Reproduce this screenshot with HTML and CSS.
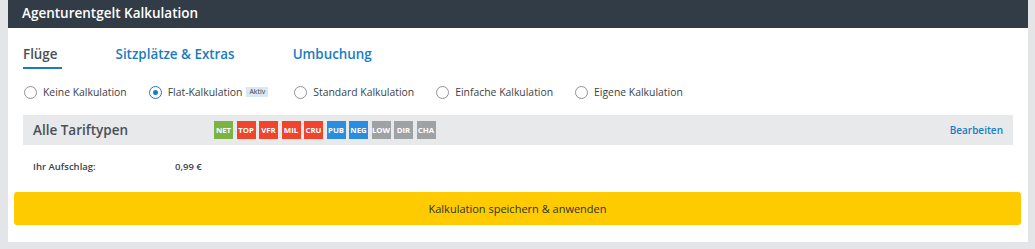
FILE: index.html
```html
<!DOCTYPE html>
<html>
<head>
    <title>Agenturentgelt Kalkulation</title>
    <link rel="stylesheet" href="styles.css">
</head>
<body>
    <div class="panel">
        <div class="panel-header">Agenturentgelt Kalkulation</div>
        <div class="panel-body">
            <div class="tabs">
                <a class="tab active">Flüge</a>
                <a class="tab">Sitzplätze &amp; Extras</a>
                <a class="tab">Umbuchung</a>
            </div>
            <div class="radios">
                <label class="radio"><span class="dot"></span>Keine Kalkulation</label>
                <label class="radio checked"><span class="dot"></span>Flat-Kalkulation <span class="badge-aktiv">Aktiv</span></label>
                <label class="radio"><span class="dot"></span>Standard Kalkulation</label>
                <label class="radio"><span class="dot"></span>Einfache Kalkulation</label>
                <label class="radio"><span class="dot"></span>Eigene Kalkulation</label>
            </div>
            <div class="tarif-bar">
                <div class="tarif-title">Alle Tariftypen</div>
                <div class="tags">
                    <span class="tag green">NET</span>
                    <span class="tag red">TOP</span>
                    <span class="tag red">VFR</span>
                    <span class="tag red">MIL</span>
                    <span class="tag red">CRU</span>
                    <span class="tag blue">PUB</span>
                    <span class="tag blue">NEG</span>
                    <span class="tag grey">LOW</span>
                    <span class="tag grey">DIR</span>
                    <span class="tag grey">CHA</span>
                </div>
                <a class="edit">Bearbeiten</a>
            </div>
            <div class="row">
                <span class="row-label">Ihr Aufschlag:</span>
                <span class="row-value">0,99 €</span>
            </div>
        </div>
        <div class="footer">
            <button class="save">Kalkulation speichern &amp; anwenden</button>
        </div>
    </div>
</body>
</html>
```

FILE: styles.css
```css
body {
    margin: 0;
    background-color: #e4e5e9;
    font-family: "Open Sans", sans-serif;
    color: #3c4248;
}

.panel {
    margin: 0 7px 0 8px;
    background-color: #fff;
    height: 242px;
}

.panel-header {
    height: 28px;
    background-color: #323c46;
    color: #fff;
    font-size: 13.5px;
    font-weight: 600;
    line-height: 27px;
    padding-left: 14px;
}

.panel-body {
    padding: 0 15px 0 15px;
}

.tabs {
    display: flex;
    padding-top: 14px;
    height: 28px;
}

.tab {
    font-size: 13.4px;
    font-weight: 600;
    color: #1a7cc1;
    margin-right: 54px;
    padding-right: 4px;
    line-height: 24px;
    height: 25px;
}

.tab.active {
    color: #4a4f56;
    border-bottom: 2px solid #1a7cc1;
}

.radios {
    display: flex;
    align-items: center;
    padding: 12px 0 0 1px;
    height: 20px;
}

.radio {
    display: flex;
    align-items: center;
    font-size: 10.4px;
    color: #3c4248;
    margin-right: 22px;
}

.dot {
    width: 11px;
    height: 11px;
    border: 1px solid #8f9397;
    border-radius: 50%;
    margin-right: 6px;
    box-sizing: content-box;
    position: relative;
}

.radio.checked .dot {
    border-color: #1a7cc1;
}

.radio.checked .dot::after {
    content: "";
    position: absolute;
    left: 3px;
    top: 3px;
    width: 5px;
    height: 5px;
    border-radius: 50%;
    background-color: #1a7cc1;
}

.badge-aktiv {
    background-color: #d7e8f6;
    color: #3c4248;
    font-size: 7px;
    line-height: 10px;
    padding: 0 3px;
    margin: 0 4px 0 4px;
}

.tarif-bar {
    display: flex;
    align-items: center;
    background-color: #e7e9eb;
    height: 30px;
    margin-top: 13px;
    padding: 0 10px;
}

.tarif-title {
    font-size: 13.5px;
    font-weight: 600;
    color: #4a4f56;
    width: 181px;
}

.tags {
    display: flex;
    gap: 3.5px;
    flex: 1;
}

.tag {
    display: inline-block;
    width: 19px;
    height: 18px;
    line-height: 18px;
    text-align: center;
    font-size: 7.8px;
    font-weight: 700;
    color: #fff;
}

.tag.green { background-color: #7cb342; }
.tag.red { background-color: #f0442c; }
.tag.blue { background-color: #2a8ee0; }
.tag.grey { background-color: #9fa2a5; }

.edit {
    font-size: 10px;
    font-weight: 600;
    color: #1a7cc1;
}

.row {
    display: flex;
    padding: 15px 10px 0 10px;
    font-size: 9.5px;
    font-weight: 600;
    color: #3c4248;
}

.row-label {
    width: 142px;
}

.footer {
    padding: 19px 7px 0 6px;
}

.save {
    display: block;
    width: 100%;
    height: 33px;
    border: none;
    border-radius: 3px;
    background-color: #fecb00;
    font-family: "Open Sans", sans-serif;
    font-size: 11px;
    color: #2d3136;
}
```
